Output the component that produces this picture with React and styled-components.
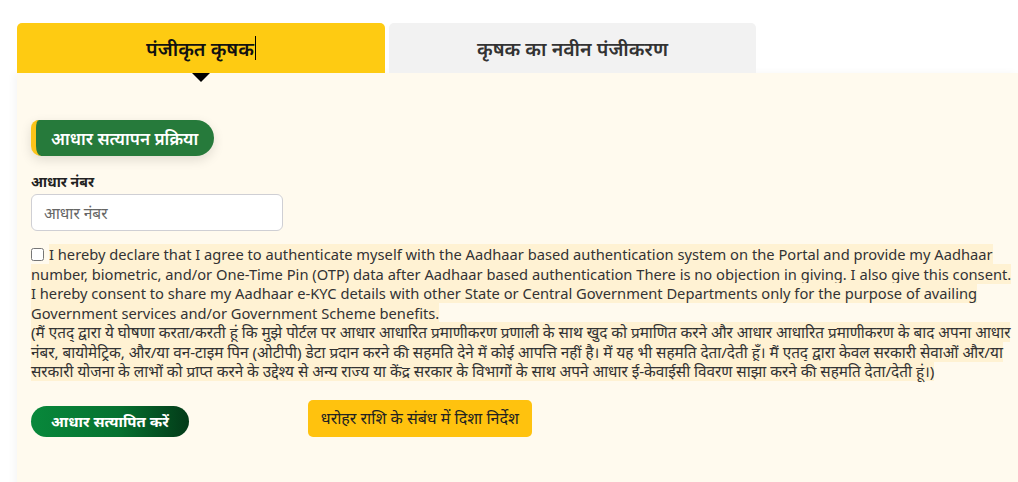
import React, { useState } from "react";
import styled, { createGlobalStyle } from "styled-components";

const GlobalStyle = createGlobalStyle`
  body {
    margin: 0;
    background: #ffffff;
    font-family: "Noto Sans", "Open Sans", sans-serif;
    color: #222;
    overflow: hidden;
  }
`;

const Page = styled.div`
  padding: 23px 0 0 17px;
  width: 1001px;
`;

const TabBar = styled.div`
  display: flex;
  gap: 4px;
`;

const Tab = styled.button`
  position: relative;
  width: ${(p) => (p.$active ? "368px" : "367px")};
  height: 50px;
  border: none;
  border-radius: 5px 5px 0 0;
  background: ${(p) => (p.$active ? "#fecb12" : "#f2f2f2")};
  color: ${(p) => (p.$active ? "#111" : "#333")};
  font-family: "Noto Sans", sans-serif;
  font-size: 19.5px;
  font-weight: 600;
  cursor: pointer;
  display: flex;
  align-items: center;
  justify-content: center;
  padding: 0;

  /* the little arrow under the selected tab */
  &::after {
    content: "";
    display: ${(p) => (p.$active ? "block" : "none")};
    position: absolute;
    left: 50%;
    bottom: -9px;
    transform: translateX(-50%);
    border-left: 9px solid transparent;
    border-right: 9px solid transparent;
    border-top: 9px solid #000;
  }
`;

const Caret = styled.span`
  display: inline-block;
  width: 1px;
  height: 24px;
  background: #000;
  margin-left: 1px;
  vertical-align: middle;
`;

const Panel = styled.section`
  background: #fffaee;
  box-shadow: -3px 0 8px rgba(0, 0, 0, 0.04);
  padding: 47px 1px 40px 14px;
  min-height: 360px;
`;

const Heading = styled.div`
  display: inline-flex;
  align-items: center;
  height: 36px;
  padding: 0 16px 0 15px;
  background: #267a3b;
  color: #fff;
  border-left: 5px solid #fcc419;
  border-radius: 8px 18px 18px 10px;
  font-size: 17px;
  font-weight: 600;
  box-shadow: 0 4px 12px rgba(0, 0, 0, 0.12);
`;

const Field = styled.div`
  margin-top: 16px;
  display: flex;
  flex-direction: column;
  gap: 3px;
`;

const Label = styled.label`
  font-size: 14px;
  font-weight: 700;
  color: #222;
`;

const Input = styled.input`
  width: 252px;
  height: 37px;
  box-sizing: border-box;
  border: 1px solid #cfcfd4;
  border-radius: 6px;
  background: #fff;
  padding: 0 12px;
  font-family: "Noto Sans", sans-serif;
  font-size: 15.5px;

  &::placeholder {
    color: #666;
  }
`;

const Consent = styled.div`
  margin-top: 14px;
  font-size: 14.7px;
  line-height: 19.5px;
  color: #333;
`;

const Mark = styled.span`
  background: #fff2d3;
  font-size: ${(p) => (p.$hindi ? "15.3px" : "inherit")};
`;

const Check = styled.input`
  width: 13px;
  height: 13px;
  margin: 0 5px 0 0;
  vertical-align: -1px;
`;

const Actions = styled.div`
  margin-top: 18px;
  display: flex;
  align-items: flex-end;
  gap: 119px;
`;

const VerifyButton = styled.button`
  height: 31px;
  padding: 0 20px;
  border: none;
  border-radius: 16px;
  background: linear-gradient(90deg, #08883b 0%, #067230 55%, #033a18 100%);
  color: #fff;
  font-family: "Noto Sans", sans-serif;
  font-size: 15px;
  font-weight: 700;
  cursor: pointer;
`;

const GuideButton = styled.button`
  height: 37px;
  padding: 0 13px;
  border: none;
  border-radius: 5px;
  background: #ffc20e;
  color: #222;
  font-family: "Noto Sans", sans-serif;
  font-size: 16px;
  cursor: pointer;
`;

export default function App() {
  const [tab, setTab] = useState(0);
  const [agree, setAgree] = useState(false);

  return (
    <>
      <GlobalStyle />
      <Page>
        <TabBar>
          <Tab $active={tab === 0} onClick={() => setTab(0)}>
            पंजीकृत कृषक
            <Caret />
          </Tab>
          <Tab $active={tab === 1} onClick={() => setTab(1)}>
            कृषक का नवीन पंजीकरण
          </Tab>
        </TabBar>

        <Panel>
          <Heading>आधार सत्यापन प्रक्रिया</Heading>

          <Field>
            <Label>आधार नंबर</Label>
            <Input placeholder="आधार नंबर" />
          </Field>

          <Consent>
            <Check
              type="checkbox"
              checked={agree}
              onChange={(e) => setAgree(e.target.checked)}
            />
            <Mark>
              I hereby declare that I agree to authenticate myself with the
              Aadhaar based authentication system on the Portal and provide my
              Aadhaar number, biometric, and/or One-Time Pin (OTP) data after
              Aadhaar based authentication There is no objection in giving. I
              also give this consent. I hereby consent to share my Aadhaar
              e-KYC details with other State or Central Government Departments
              only for the purpose of availing Government services and/or
              Government Scheme benefits.
            </Mark>
            <br />
            <Mark $hindi>
              (मैं एतद् द्वारा ये घोषणा करता/करती हूं कि मुझे पोर्टल पर आधार
              आधारित प्रमाणीकरण प्रणाली के साथ खुद को प्रमाणित करने और आधार
              आधारित प्रमाणीकरण के बाद अपना आधार नंबर, बायोमेट्रिक, और/या
              वन-टाइम पिन (ओटीपी) डेटा प्रदान करने की सहमति देने में कोई आपत्ति
              नहीं है। में यह भी सहमति देता/देती हूँ। मैं एतद् द्वारा केवल
              सरकारी सेवाओं और/या सरकारी योजना के लाभों को प्राप्त करने के
              उद्देश्य से अन्य राज्य या केंद्र सरकार के विभागों के साथ अपने
              आधार ई-केवाईसी विवरण साझा करने की सहमति देता/देती हूं।)
            </Mark>
          </Consent>

          <Actions>
            <VerifyButton>आधार सत्यापित करें</VerifyButton>
            <GuideButton>धरोहर राशि के संबंध में दिशा निर्देश</GuideButton>
          </Actions>
        </Panel>
      </Page>
    </>
  );
}
